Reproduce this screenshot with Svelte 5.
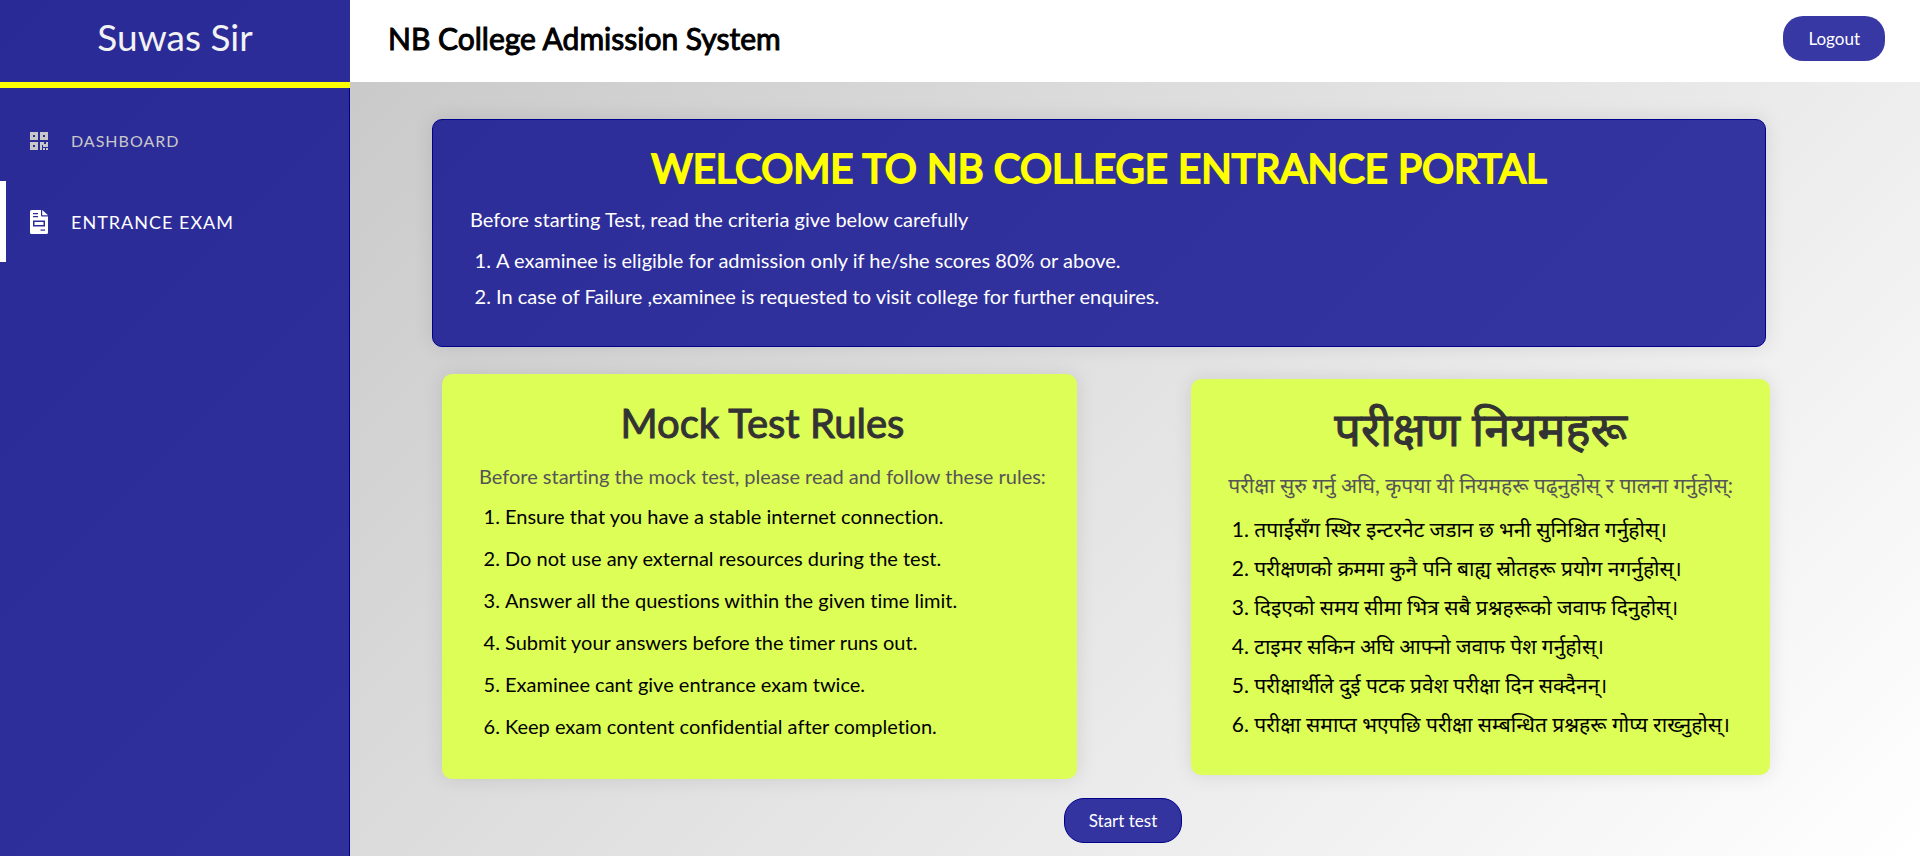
<script>
  const criteria = [
    'A examinee is eligible for admission only if he/she scores 80% or above.',
    'In case of Failure ,examinee is requested to visit college for further enquires.'
  ];
  const rules = [
    'Ensure that you have a stable internet connection.',
    'Do not use any external resources during the test.',
    'Answer all the questions within the given time limit.',
    'Submit your answers before the timer runs out.',
    'Examinee cant give entrance exam twice.',
    'Keep exam content confidential after completion.'
  ];
  const rulesNe = [
    'तपाईंसँग स्थिर इन्टरनेट जडान छ भनी सुनिश्चित गर्नुहोस्।',
    'परीक्षणको क्रममा कुनै पनि बाह्य स्रोतहरू प्रयोग नगर्नुहोस्।',
    'दिइएको समय सीमा भित्र सबै प्रश्नहरूको जवाफ दिनुहोस्।',
    'टाइमर सकिन अघि आफ्नो जवाफ पेश गर्नुहोस्।',
    'परीक्षार्थीले दुई पटक प्रवेश परीक्षा दिन सक्दैनन्।',
    'परीक्षा समाप्त भएपछि परीक्षा सम्बन्धित प्रश्नहरू गोप्य राख्नुहोस्।'
  ];
</script>

<div class="page">
  <aside>
    <div class="user">Suwas Sir</div>
    <nav>
      <a href="#dashboard">
        <svg width="18" height="18" viewBox="0 0 18 18" fill="currentColor" aria-hidden="true">
          <path fill-rule="evenodd" d="M0 0h8v8H0zM3 3v2h2V3zM10 0h8v8h-8zM13 3v2h2V3zM0 10h8v8H0zM3 13v2h2v-2z" />
          <path d="M10 10h4v2h2v-2h2v5h-5v-2h-1v5h-2zM13 16h2v2h-2zM16 16h2v2h-2z" />
        </svg>
        <span>Dashboard</span>
      </a>
      <a href="#exam" class="active" aria-current="page">
        <svg width="18" height="24" viewBox="0 0 18 24" fill="currentColor" aria-hidden="true">
          <path fill-rule="evenodd" d="M1.500 0H11v5.500q0 1 1 1h6v16q0 1.500-1.500 1.500h-15Q0 24 0 22.500v-21Q0 0 1.500 0zM3 3v1.200h5V3zM3 6v1.200h5V6zM3 10.500v6h12v-6zM4.500 12h9v3h-9zM10.500 19.500v1.200H15v-1.200z" />
          <path d="M12.200 0 18 5.300h-5.800z" />
        </svg>
        <span>Entrance Exam</span>
      </a>
    </nav>
  </aside>

  <div class="main">
    <header>
      <h1>NB College Admission System</h1>
      <button type="button" class="logout">Logout</button>
    </header>
    <main>
      <section class="card welcome">
        <h2>WELCOME TO NB COLLEGE ENTRANCE PORTAL</h2>
        <p>Before starting Test, read the criteria give below carefully</p>
        <ol>
          {#each criteria as item}<li>{item}</li>{/each}
        </ol>
      </section>
      <div class="columns">
        <section class="card rules english">
          <h2>Mock Test Rules</h2>
          <p>Before starting the mock test, please read and follow these rules:</p>
          <ol>
            {#each rules as item}<li>{item}</li>{/each}
          </ol>
        </section>
        <section class="card rules nepali" lang="ne">
          <h2>परीक्षण नियमहरू</h2>
          <p>परीक्षा सुरु गर्नु अघि, कृपया यी नियमहरू पढ्नुहोस् र पालना गर्नुहोस्:</p>
          <ol>
            {#each rulesNe as item}<li>{item}</li>{/each}
          </ol>
        </section>
      </div>
      <div class="actions">
        <button type="button" class="start">Start test</button>
      </div>
    </main>
  </div>
</div>

<style>
  :global(body) {
    margin: 0;
    font-family: Lato, "Noto Sans Devanagari", "Noto Sans", sans-serif;
    font-variant-ligatures: no-common-ligatures;
  }
  .page {
    display: flex;
    min-height: 100vh;
    background: linear-gradient(135deg, silver, white);
  }
  aside {
    flex: 0 0 350px;
    box-sizing: border-box;
    background: rgba(0, 0, 139, 0.78);
  }
  .user {
    height: 82px;
    line-height: 74px;
    border-bottom: 6px solid yellow;
    text-align: center;
    color: #f2f2f2;
    font-size: 37px;
  }
  nav {
    display: flex;
    flex-direction: column;
    border-right: 1px solid darkblue;
    min-height: calc(100vh - 88px);
    padding-top: 12px;
    box-sizing: border-box;
  }
  nav a {
    display: flex;
    align-items: center;
    height: 81px;
    padding-left: 30px;
    color: #c8c8c8;
    font-size: 16px;
    letter-spacing: 1px;
    text-transform: uppercase;
    text-decoration: none;
  }
  nav a span {
    padding-left: 23px;
  }
  nav a.active {
    padding-left: 24px;
    border-left: 6px solid white;
    color: white;
    font-size: 18px;
  }
  .main {
    flex: 1;
    min-width: 0;
  }
  header {
    display: flex;
    align-items: center;
    justify-content: space-between;
    height: 82px;
    box-sizing: border-box;
    padding: 0 35px 6px 38px;
    background: white;
  }
  h1, h2, p, ol {
    margin: 0;
    font-weight: 400;
  }
  h1 {
    font-size: 30px;
    -webkit-text-stroke: 1px currentColor;
    color: black;
  }
  button {
    height: 45px;
    padding: 0 25px;
    border: 0;
    border-radius: 20px;
    background: rgba(0, 0, 139, 0.78);
    color: white;
    font-family: inherit;
    font-size: 17px;
  }
  .start {
    border: 1px solid darkblue;
    padding: 0 24px;
  }
  .actions {
    display: flex;
    justify-content: center;
    padding: 19px 0 0 44px;
  }
  main {
    margin: 37px 150px 0 82px;
  }
  .card {
    box-sizing: border-box;
    padding: 27px 37px;
    border-radius: 10px;
    box-shadow: 0 0 20px rgba(0, 0, 0, 0.1);
    font-size: 20px;
    line-height: 30px;
  }
  .card h2 {
    text-align: center;
    font-size: 40px;
    line-height: 44px;
    margin-bottom: 16px;
    -webkit-text-stroke: 1px currentColor;
  }
  .card ol {
    padding-left: 26px;
  }
  .welcome {
    height: 228px;
    margin-right: 4px;
    padding-top: 26px;
    border: 1px solid darkblue;
    background: rgba(0, 0, 139, 0.78);
    color: white;
  }
  .card.welcome h2 {
    color: yellow;
    margin-bottom: 14px;
    -webkit-text-stroke-width: 2px;
  }
  .welcome ol {
    margin-top: 8px;
    line-height: 36px;
  }
  .columns {
    display: flex;
    align-items: center;
    justify-content: space-between;
    margin: 27px 0 0 10px;
  }
  .rules {
    background: #ddfd57;
    color: black;
    padding-bottom: 32px;
  }
  .english {
    padding-right: 31px;
  }
  .rules h2 {
    color: #333;
  }
  .rules p {
    color: #555;
  }
  .rules ol {
    margin-top: 4px;
    line-height: 42px;
  }
  .nepali {
    font-size: 21px;
  }
  .card.nepali h2 {
    font-size: 47px;
    margin-bottom: 20px;
  }
  .nepali ol {
    margin-top: 9px;
    line-height: 39px;
  }
</style>
